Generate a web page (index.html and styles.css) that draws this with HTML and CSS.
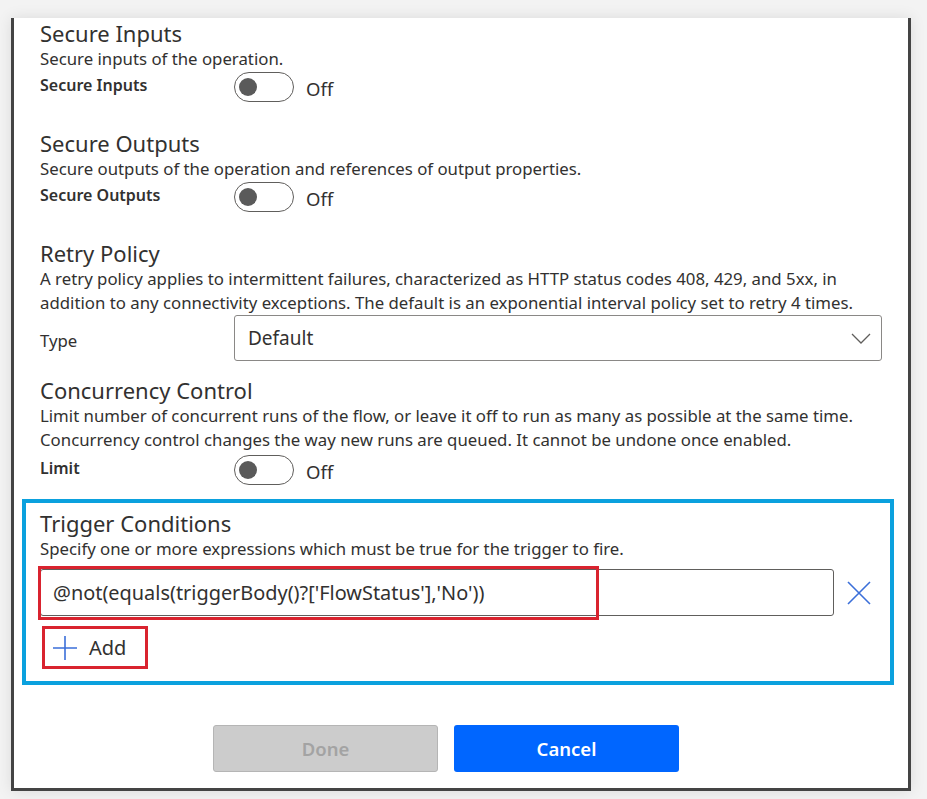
FILE: index.html
```html
<!DOCTYPE html>
<html>
<head>
<meta charset="utf-8">
<link rel="stylesheet" href="styles.css">
</head>
<body>
<div class="panel">
  <section class="sec">
    <h2 class="title">Secure Inputs</h2>
    <p class="desc">Secure inputs of the operation.</p>
    <div class="row">
      <span class="label">Secure Inputs</span>
      <span class="toggle"><span class="knob"></span></span>
      <span class="state">Off</span>
    </div>
  </section>
  <section class="sec">
    <h2 class="title">Secure Outputs</h2>
    <p class="desc">Secure outputs of the operation and references of output properties.</p>
    <div class="row">
      <span class="label">Secure Outputs</span>
      <span class="toggle"><span class="knob"></span></span>
      <span class="state">Off</span>
    </div>
  </section>
  <section class="sec">
    <h2 class="title">Retry Policy</h2>
    <p class="desc">A retry policy applies to intermittent failures, characterized as HTTP status codes 408, 429, and 5xx, in<br>addition to any connectivity exceptions. The default is an exponential interval policy set to retry 4 times.</p>
    <div class="row select-row">
      <span class="label plain">Type</span>
      <div class="select">
        <span>Default</span>
        <svg class="chev" width="20" height="12" viewBox="0 0 20 12"><path d="M1 1 L10 10 L19 1" fill="none" stroke="#605e5c" stroke-width="1.3"/></svg>
      </div>
    </div>
  </section>
  <section class="sec conc">
    <h2 class="title">Concurrency Control</h2>
    <p class="desc">Limit number of concurrent runs of the flow, or leave it off to run as many as possible at the same time.<br>Concurrency control changes the way new runs are queued. It cannot be undone once enabled.</p>
    <div class="row">
      <span class="label">Limit</span>
      <span class="toggle"><span class="knob"></span></span>
      <span class="state">Off</span>
    </div>
  </section>
  <section class="trigger">
    <h2 class="title">Trigger Conditions</h2>
    <p class="desc">Specify one or more expressions which must be true for the trigger to fire.</p>
    <div class="cond-row">
      <div class="cond-input">
        <span class="cond-text">@not(equals(triggerBody()?['FlowStatus'],'No'))</span>
        <span class="highlight"></span>
      </div>
      <svg class="xicon" width="24" height="24" viewBox="0 0 24 24"><path d="M1 1 L23 23 M23 1 L1 23" stroke="#3b6fd9" stroke-width="1.6" fill="none"/></svg>
    </div>
    <button class="add">
      <svg width="24" height="24" viewBox="0 0 24 24"><path d="M12 0 V24 M0 12 H24" stroke="#3b6fd9" stroke-width="1.6" fill="none"/></svg>
      <span>Add</span>
    </button>
  </section>
  <div class="actions">
    <button class="btn done">Done</button>
    <button class="btn cancel">Cancel</button>
  </div>
</div>
</body>
</html>
```

FILE: styles.css
```css
* { box-sizing: border-box; }
html, body { margin: 0; padding: 0; }
body {
  background: #f3f3f3;
  font-family: "Noto Sans", "Open Sans", sans-serif;
  color: #323130;
  width: 927px;
  height: 799px;
  overflow: hidden;
}
.panel {
  margin: 18px 0 0 11px;
  width: 900px;
  height: 773px;
  background: #fff;
  border: 3px solid #444;
  border-top: none;
  box-shadow: 0 0 14px rgba(0,0,0,0.10);
  padding-top: 1px;
}
.sec { padding-left: 26px; }
.title {
  margin: 0;
  font-size: 22px;
  line-height: 28px;
  font-weight: 400;
  color: #323130;
}
.desc {
  margin: 0;
  font-size: 16.8px;
  line-height: 24px;
  color: #323130;
}
.row {
  display: flex;
  align-items: center;
  height: 30px;
  margin-top: 1px;
  margin-bottom: 27px;
}
.label {
  width: 194px;
  font-size: 16px;
  font-weight: 600;
  line-height: 20px;
  align-self: flex-start;
  margin-top: 3px;
}
.label.plain { font-weight: 400; font-size: 16.8px; align-self: center; margin-top: 6px; }
.toggle {
  width: 60px;
  height: 30px;
  border: 1px solid #605e5c;
  border-radius: 15px;
  display: flex;
  align-items: center;
  padding-left: 4px;
}
.knob {
  width: 18px;
  height: 18px;
  border-radius: 50%;
  background: #5a5a5a;
}
.state {
  margin-left: 12px;
  font-size: 18.5px;
  margin-top: 2px;
}
.select-row {
  height: 46px;
  margin-top: 0;
  margin-bottom: 15px;
}
.select {
  width: 648px;
  height: 46px;
  border: 1px solid #8a8886;
  border-radius: 3px;
  display: flex;
  align-items: center;
  justify-content: space-between;
  padding: 0 10px 0 13px;
  font-size: 19px;
}
.chev { margin-top: 2px; }
.conc .row { margin-top: 3px; margin-bottom: 14px; }
.trigger {
  margin: 0 14px 0 8px;
  border: 4px solid #0ba1de;
  padding: 6px 0 12px 14px;
  height: 186px;
}
.cond-row {
  display: flex;
  align-items: center;
  margin-top: 8px;
}
.cond-input {
  position: relative;
  width: 794px;
  height: 47px;
  border: 1px solid #605e5c;
  border-radius: 3px;
  display: flex;
  align-items: center;
  padding-left: 12px;
  font-size: 19.9px;
}
.highlight {
  position: absolute;
  left: -3px;
  top: -4px;
  width: 561px;
  height: 54px;
  border: 3px solid #d9232f;
}
.xicon { margin-left: 13px; }
.add {
  margin-top: 10px;
  margin-left: 2px;
  width: 106px;
  height: 43px;
  border: 3px solid #d9232f;
  background: #fff;
  display: flex;
  align-items: center;
  padding: 0 0 0 8px;
  gap: 12px;
  font-family: inherit;
  font-size: 20px;
  color: #323130;
}
.actions {
  display: flex;
  gap: 16px;
  margin: 40px 0 0 199px;
}
.btn {
  width: 225px;
  height: 47px;
  border-radius: 3px;
  font-family: inherit;
  font-size: 18.5px;
  font-weight: 600;
}
.done {
  background: #cccccc;
  border: 1px solid #b5b5b5;
  color: #a3a3a3;
}
.cancel {
  background: #0066ff;
  border: none;
  color: #fff;
}
```
